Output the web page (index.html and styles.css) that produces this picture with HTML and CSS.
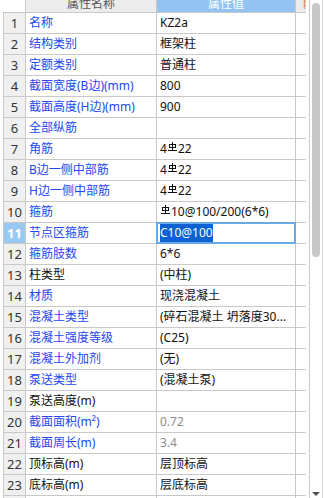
FILE: index.html
```html
<!DOCTYPE html>
<html lang="zh-CN">
<head>
    <meta charset="UTF-8">
    <title>属性编辑器</title>
    <link rel="stylesheet" href="styles.css">
</head>
<body>
    <div class="panel">
        <div class="grid">
            <div class="row head">
                <div class="corner"></div>
                <div class="hcell"><span>属性名称</span></div>
                <div class="hcell active"><span>属性值</span></div>
                <div class="hcell extra"><span>附加</span></div>
            </div>

            <div class="row"><div class="num">1</div><div class="name">名称</div><div class="val">KZ2a</div><div class="ext"></div></div>
            <div class="row"><div class="num">2</div><div class="name">结构类别</div><div class="val">框架柱</div><div class="ext"></div></div>
            <div class="row"><div class="num">3</div><div class="name">定额类别</div><div class="val">普通柱</div><div class="ext"></div></div>
            <div class="row"><div class="num">4</div><div class="name">截面宽度(B边)(mm)</div><div class="val">800</div><div class="ext"></div></div>
            <div class="row"><div class="num">5</div><div class="name">截面高度(H边)(mm)</div><div class="val">900</div><div class="ext"></div></div>
            <div class="row"><div class="num">6</div><div class="name">全部纵筋</div><div class="val"></div><div class="ext"></div></div>
            <div class="row"><div class="num">7</div><div class="name">角筋</div><div class="val">4<svg class="bar" width="9" height="10" viewBox="0 0 9 10"><rect x="1.5" y="2.5" width="6" height="3" fill="none" stroke="#111"/><path d="M4.5 0v8M0 8.5h9" stroke="#111"/></svg>22</div><div class="ext"></div></div>
            <div class="row"><div class="num">8</div><div class="name">B边一侧中部筋</div><div class="val">4<svg class="bar" width="9" height="10" viewBox="0 0 9 10"><rect x="1.5" y="2.5" width="6" height="3" fill="none" stroke="#111"/><path d="M4.5 0v8M0 8.5h9" stroke="#111"/></svg>22</div><div class="ext"></div></div>
            <div class="row"><div class="num">9</div><div class="name">H边一侧中部筋</div><div class="val">4<svg class="bar" width="9" height="10" viewBox="0 0 9 10"><rect x="1.5" y="2.5" width="6" height="3" fill="none" stroke="#111"/><path d="M4.5 0v8M0 8.5h9" stroke="#111"/></svg>22</div><div class="ext"></div></div>
            <div class="row"><div class="num">10</div><div class="name">箍筋</div><div class="val"><svg class="bar" width="9" height="10" viewBox="0 0 9 10"><rect x="1.5" y="2.5" width="6" height="3" fill="none" stroke="#111"/><path d="M4.5 0v8M0 8.5h9" stroke="#111"/></svg>10@100/200(6*6)</div><div class="ext"></div></div>
            <div class="row selected"><div class="num">11</div><div class="name">节点区箍筋</div><div class="val editing"><span class="sel">C10@100</span></div><div class="ext"></div></div>
            <div class="row"><div class="num">12</div><div class="name">箍筋肢数</div><div class="val">6*6</div><div class="ext"></div></div>
            <div class="row"><div class="num">13</div><div class="name plain">柱类型</div><div class="val">(中柱)</div><div class="ext"></div></div>
            <div class="row"><div class="num">14</div><div class="name">材质</div><div class="val">现浇混凝土</div><div class="ext"></div></div>
            <div class="row"><div class="num">15</div><div class="name">混凝土类型</div><div class="val">(碎石混凝土 坍落度30...</div><div class="ext"></div></div>
            <div class="row"><div class="num">16</div><div class="name">混凝土强度等级</div><div class="val">(C25)</div><div class="ext"></div></div>
            <div class="row"><div class="num">17</div><div class="name">混凝土外加剂</div><div class="val">(无)</div><div class="ext"></div></div>
            <div class="row"><div class="num">18</div><div class="name">泵送类型</div><div class="val">(混凝土泵)</div><div class="ext"></div></div>
            <div class="row"><div class="num">19</div><div class="name plain">泵送高度(m)</div><div class="val"></div><div class="ext"></div></div>
            <div class="row"><div class="num">20</div><div class="name">截面面积(m²)</div><div class="val muted">0.72</div><div class="ext"></div></div>
            <div class="row"><div class="num">21</div><div class="name">截面周长(m)</div><div class="val muted">3.4</div><div class="ext"></div></div>
            <div class="row"><div class="num">22</div><div class="name plain">顶标高(m)</div><div class="val">层顶标高</div><div class="ext"></div></div>
            <div class="row"><div class="num">23</div><div class="name plain">底标高(m)</div><div class="val">层底标高</div><div class="ext"></div></div>
            <div class="row"><div class="num">24</div><div class="name">保护层厚度(mm)</div><div class="val">(20)</div><div class="ext"></div></div>
        </div>

        <div class="scroll">
            <div class="thumb"></div>
            <div class="arrow"></div>
        </div>
    </div>
</body>
</html>
```

FILE: styles.css
```css
body {
    margin: 0;
    background: #fff;
    font-family: "Noto Sans", "Noto Sans CJK SC", sans-serif;
    font-size: 12px;
}
.panel {
    width: 324px;
    height: 498px;
    overflow: hidden;
    display: flex;
}
.grid {
    width: 303px;
    padding-left: 3px;
    flex: none;
}
.row {
    display: grid;
    grid-template-columns: 21px 130px 138px 10px;
    column-gap: 1px;
    background: #c9c9c9;
    border-left: 1px solid #c9c9c9;
    border-top: 1px solid #c9c9c9;
    height: 20px;
}
.row > div {
    line-height: 20px;
    white-space: nowrap;
    overflow: hidden;
}
.head {
    height: 12px;
    border-top: none;
    border-left-color: #fff;
    background: #c9c9c9;
}
.head > div {
    line-height: 12px;
}
.corner {
    background: #fff;
}
.hcell {
    background: #ececec;
    color: #555;
    text-align: center;
}
.hcell span {
    display: block;
    margin-top: -4px;
    line-height: 16px;
}
.hcell.active {
    background: #92c3f1;
    color: #fff;
}
.hcell.extra {
    text-align: left;
    color: #d07a20;
}
.hcell.extra span {
    padding-left: 7px;
}
.num {
    background: #f0f0f0;
    color: #333;
    text-align: center;
    font-size: 13px;
}
.name {
    background: #fff;
    color: #2347f2;
    padding-left: 3px;
}
.name.plain {
    color: #111;
}
.val {
    background: #fff;
    color: #111;
    padding-left: 3px;
}
.val.muted {
    color: #8c8c8c;
}
.ext {
    background: #fff;
}
.bar {
    vertical-align: 1px;
    margin: 0 1px;
}
.selected .num {
    background: #99c8f1;
    color: #fff;
    font-weight: bold;
}
.selected .val.editing {
    overflow: visible;
    outline: 2px solid #6aa8e6;
    outline-offset: -1px;
    position: relative;
    z-index: 1;
}
.sel {
    background: #0b62d0;
    color: #fff;
    padding: 1px 0;
}
.scroll {
    width: 14px;
    margin-left: 3px;
    border-left: 1px solid #c9c9c9;
    border-right: 1px solid #d4d4d4;
    padding-top: 3px;
    display: flex;
    flex-direction: column;
    align-items: center;
    box-sizing: border-box;
    height: 498px;
}
.thumb {
    width: 8px;
    height: 254px;
    background: #c8c8c8;
    border-radius: 4px;
}
.arrow {
    margin-top: auto;
    margin-bottom: 2px;
    width: 0;
    height: 0;
    border-left: 4px solid transparent;
    border-right: 4px solid transparent;
    border-top: 4px solid #505050;
}
```
